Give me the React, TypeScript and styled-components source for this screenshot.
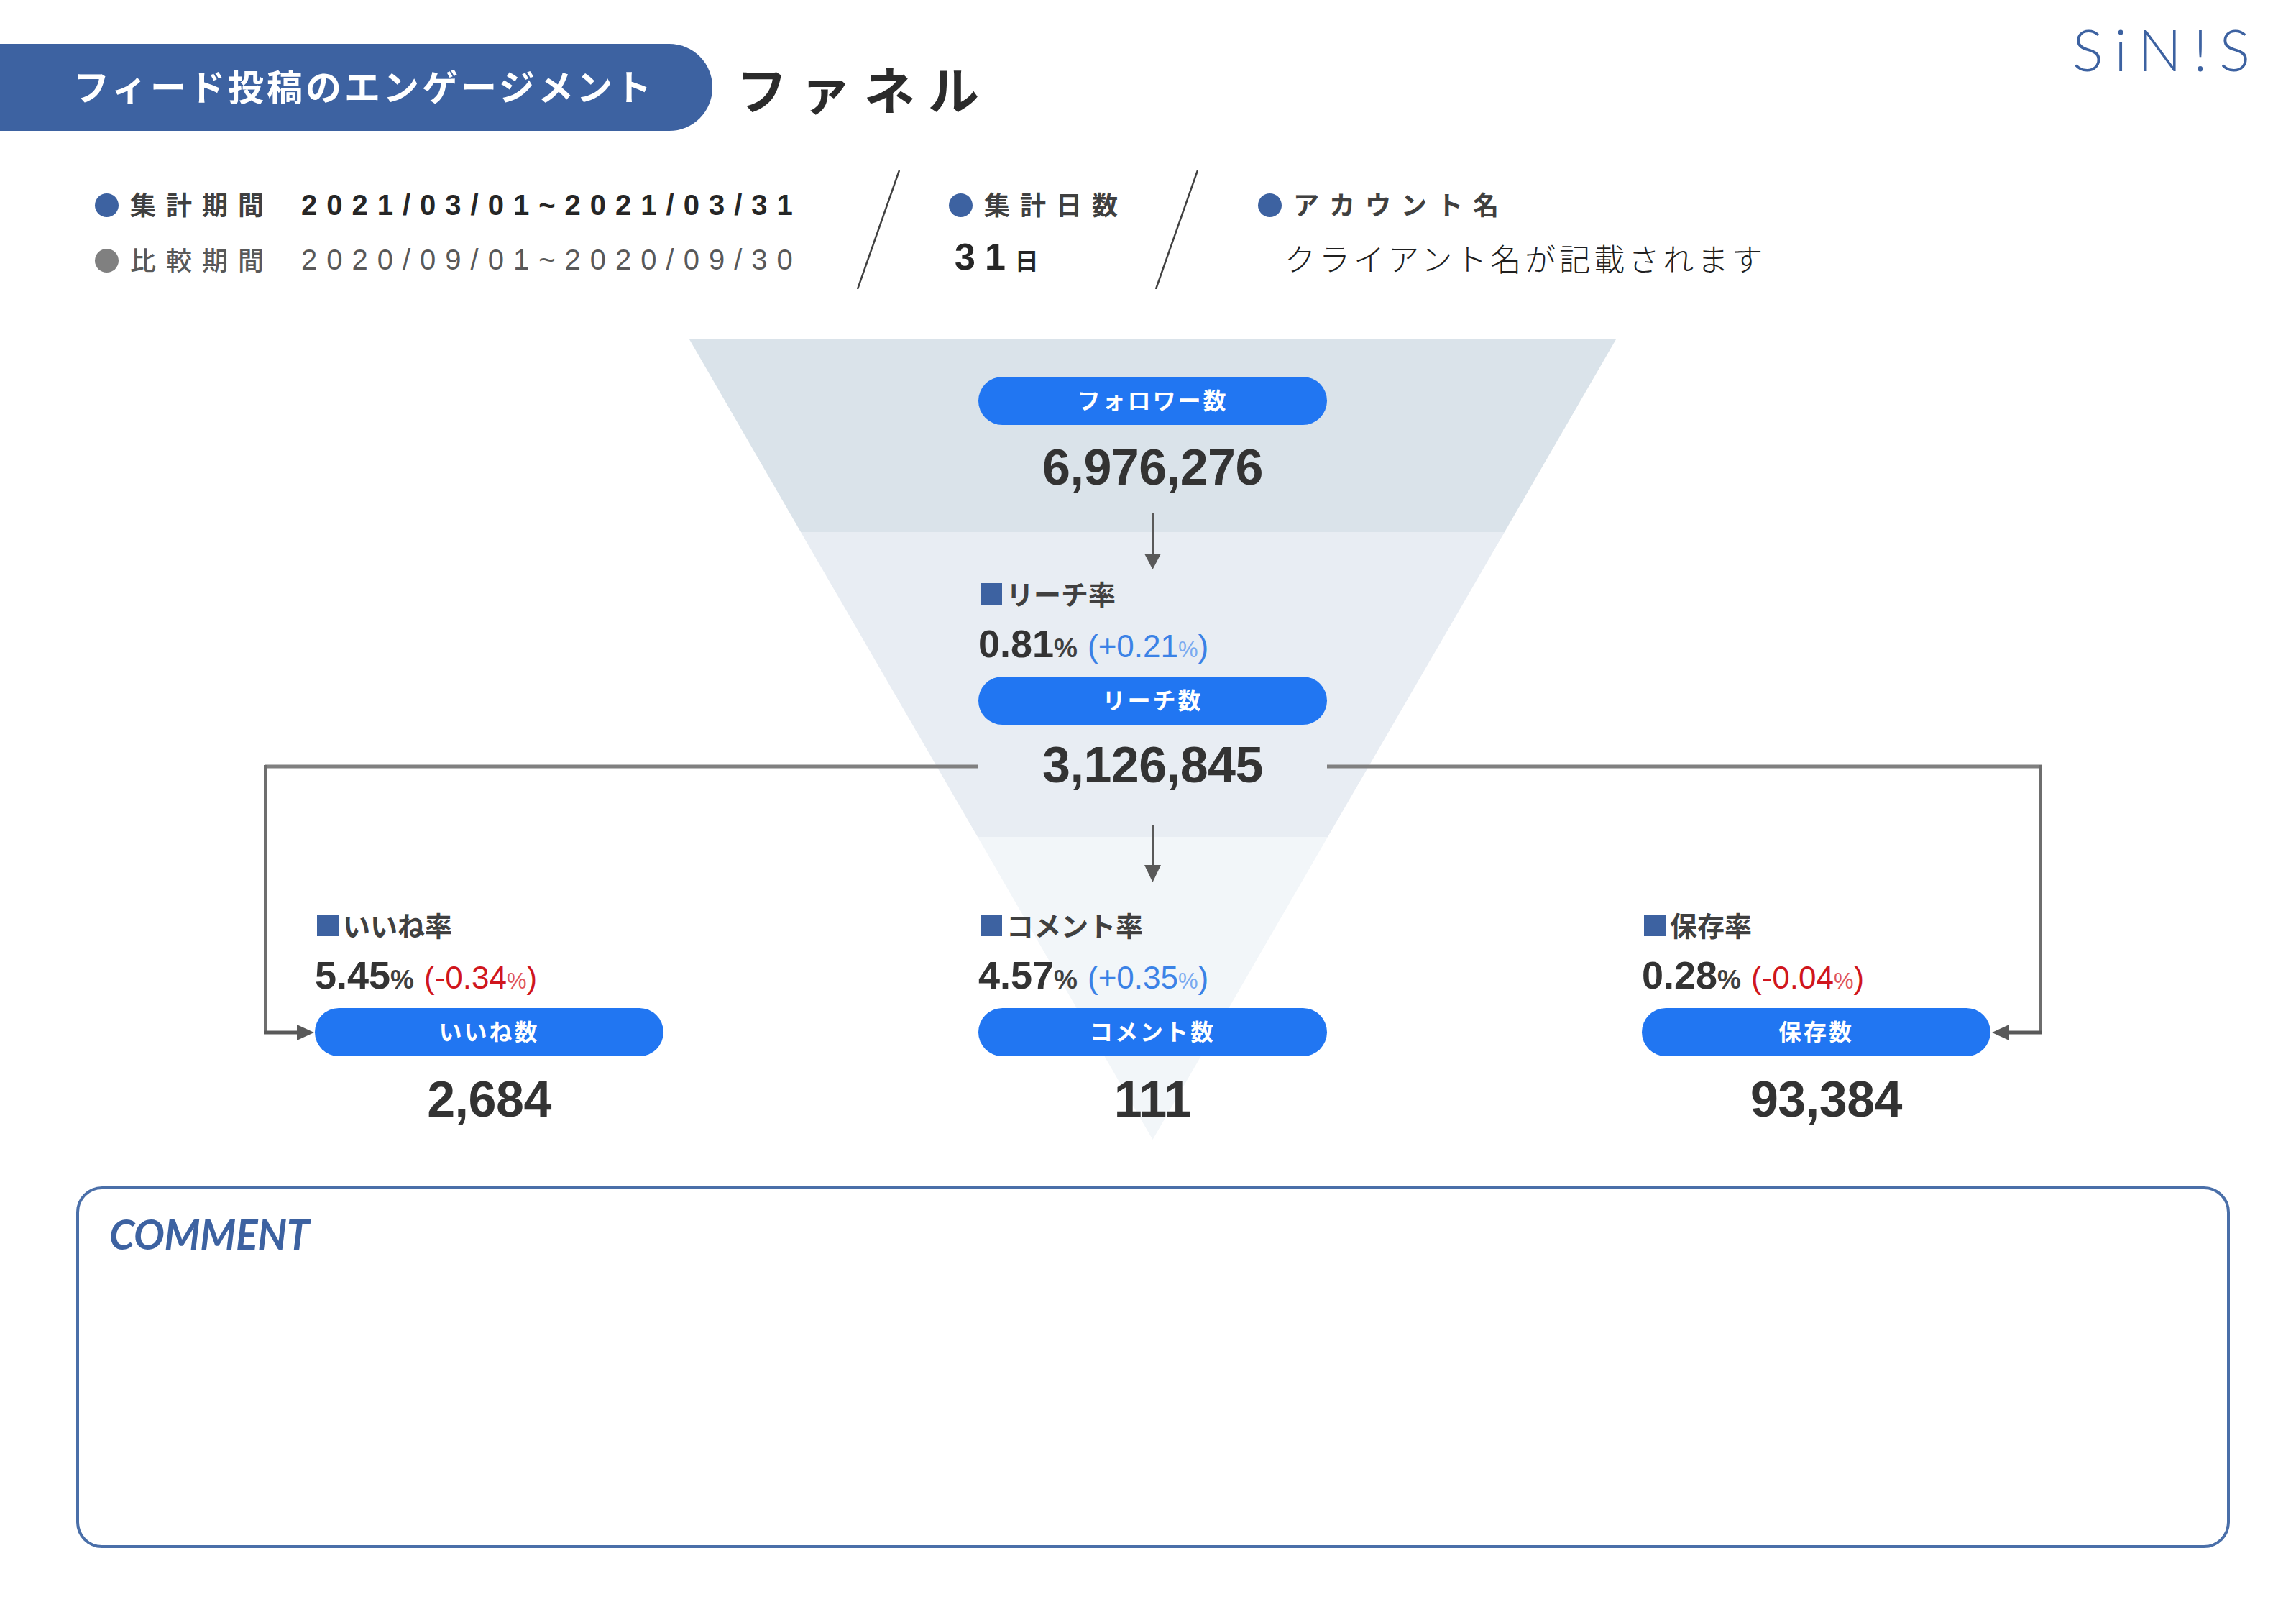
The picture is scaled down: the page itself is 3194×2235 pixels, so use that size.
import React from "react";
import styled, { createGlobalStyle } from "styled-components";

const Global = createGlobalStyle`
  html, body { margin: 0; padding: 0; background: #fff; }
  body { font-family: "Liberation Sans", "Noto Sans CJK JP", sans-serif; color: #333; }
  * { box-sizing: border-box; }
`;

const Page = styled.div`
  width: 3194px;
  height: 2235px;
  overflow: hidden;
  background: #fff;
`;

const Header = styled.header`
  display: flex;
  align-items: flex-start;
  height: 182px;
  padding-top: 42px;
`;

const TitlePill = styled.h1`
  margin: 19px 0 0;
  width: 991px;
  height: 121px;
  padding: 0 0 8px 102px;
  display: flex;
  align-items: center;
  background: #3d62a1;
  border-radius: 0 60px 60px 0;
  color: #fff;
  font-family: "Noto Sans CJK JP", sans-serif;
  font-size: 50px;
  font-weight: 700;
  letter-spacing: 4px;
  white-space: nowrap;
`;

const PageTitle = styled.h2`
  margin: 34px 0 0 33px;
  font-family: "Noto Sans CJK JP", sans-serif;
  font-size: 71px;
  line-height: 90px;
  font-weight: 700;
  letter-spacing: 18px;
  color: #2b2b2b;
  white-space: nowrap;
`;

const Logo = styled.div`
  margin-top: -4px;
  margin-left: auto;
  margin-right: 48px;
  font-family: Lato, "Liberation Sans", sans-serif;
  font-weight: 300;
  font-size: 80px;
  line-height: 60px;
  letter-spacing: 16px;
  color: #3d62a1;
  white-space: nowrap;
`;

const InfoBar = styled.section`
  display: flex;
  height: 165px;
  margin-top: 55px;
  padding-left: 132px;
`;

const InfoGroup = styled.div<{ $w: number; $pad?: number }>`
  width: ${(p) => p.$w}px;
  padding: 28px 0 0 ${(p) => p.$pad ?? 0}px;
  display: flex;
  flex-direction: column;
  gap: 37px;
  flex: none;
`;

const InfoRow = styled.div`
  display: flex;
  align-items: center;
  height: 40px;
  white-space: nowrap;
`;

const Dot = styled.span<{ $gray?: boolean }>`
  width: 33px;
  height: 33px;
  flex: none;
  border-radius: 50%;
  background: ${(p) => (p.$gray ? "#808080" : "#3d62a1")};
`;

const InfoLabel = styled.span<{ $muted?: boolean }>`
  margin: 0 0 5px 16px;
  font-family: "Noto Sans CJK JP", sans-serif;
  font-size: 36px;
  line-height: 40px;
  font-weight: ${(p) => (p.$muted ? 500 : 700)};
  letter-spacing: 14px;
  color: ${(p) => (p.$muted ? "#595959" : "#404040")};
`;

const DateText = styled.span<{ $muted?: boolean }>`
  margin-left: 38px;
  margin-bottom: ${(p) => (p.$muted ? 2 : 0)}px;
  font-size: 40px;
  line-height: 40px;
  font-weight: ${(p) => (p.$muted ? 400 : 700)};
  letter-spacing: 13px;
  color: ${(p) => (p.$muted ? "#595959" : "#262626")};
`;

const DaysValue = styled.span`
  margin: 0 0 6px 8px;
  font-size: 52px;
  line-height: 40px;
  font-weight: 700;
  letter-spacing: 13px;
  color: #262626;
`;

const DaysUnit = styled.span`
  font-family: "Noto Sans CJK JP", sans-serif;
  font-size: 33px;
  letter-spacing: 0;
`;

const ClientName = styled.span`
  margin: 0 0 9px 37px;
  font-family: "Noto Sans CJK JP", sans-serif;
  font-size: 43px;
  line-height: 40px;
  font-weight: 300;
  letter-spacing: 5px;
  color: #1f1f1f;
`;

const Slash = styled.svg`
  flex: none;
  width: 60px;
  height: 165px;
`;

const Diagram = styled.section`
  position: relative;
  height: 1178px;
  margin-top: 70px;
  display: grid;
  grid-template-columns: repeat(3, 485px);
  column-gap: 438px;
  align-content: start;
  padding-left: 438px;
`;

const DiagramArt = styled.svg`
  position: absolute;
  left: 0;
  top: 0;
  width: 3194px;
  height: 1178px;
`;

const Node = styled.div<{ $top: number; $col: number }>`
  position: relative;
  grid-column: ${(p) => p.$col};
  margin-top: ${(p) => p.$top}px;
`;

const RateLabel = styled.div`
  display: flex;
  align-items: center;
  height: 40px;
  padding-left: 3px;
  font-family: "Noto Sans CJK JP", sans-serif;
  font-size: 38px;
  font-weight: 700;
  color: #404040;
  white-space: nowrap;
`;

const Square = styled.span`
  width: 30px;
  height: 30px;
  margin: 4px 6px 0 0;
  background: #3d62a1;
`;

const RateRow = styled.div`
  height: 60px;
  margin-top: 21px;
  line-height: 60px;
  white-space: nowrap;
`;

const RateValue = styled.span`
  font-size: 54px;
  font-weight: 700;
  letter-spacing: 0;
  color: #333;
`;

const RatePercent = styled.span`
  font-size: 37px;
  font-weight: 700;
  color: #404040;
`;

const Delta = styled.span<{ $down?: boolean }>`
  margin-left: 14px;
  font-size: 44px;
  color: ${(p) => (p.$down ? "#d0161d" : "#3b82e6")};
`;

const DeltaPercent = styled.span<{ $down?: boolean }>`
  font-size: 31px;
  color: ${(p) => (p.$down ? "#e0565b" : "#7aaaf0")};
`;

const NamePill = styled.div<{ $gap: number }>`
  height: 67px;
  margin-top: ${(p) => p.$gap}px;
  padding-bottom: 6px;
  display: flex;
  align-items: center;
  justify-content: center;
  border-radius: 34px;
  background: #2176f2;
  color: #fff;
  font-family: "Noto Sans CJK JP", sans-serif;
  font-size: 32px;
  font-weight: 700;
  letter-spacing: 3px;
  white-space: nowrap;
`;

const Count = styled.div<{ $gap: number; $shift?: number }>`
  height: 80px;
  margin-top: ${(p) => p.$gap}px;
  padding-left: ${(p) => p.$shift ?? 0}px;
  text-align: center;
  font-size: 70px;
  line-height: 80px;
  font-weight: 700;
  letter-spacing: -0.5px;
  color: #333;
`;

const CommentBox = styled.section`
  width: 2996px;
  height: 503px;
  margin-left: 106px;
  padding: 30px 42px;
  border: 4px solid #4a6fa9;
  border-radius: 36px;
  background: #fff;
`;

const CommentTitle = styled.h3`
  margin: 0;
  font-family: Lato, "Liberation Sans", sans-serif;
  font-size: 57px;
  line-height: 64px;
  font-style: italic;
  font-weight: 700;
  letter-spacing: -0.4px;
  color: #3d62a1;
`;

type NodeData = {
  col: number;
  top: number;
  rateLabel?: string;
  rate?: string;
  delta?: string;
  down?: boolean;
  pill: string;
  count: string;
  countGap: number;
  shift?: number;
};

const nodes: NodeData[] = [
  { col: 2, top: 52, pill: "フォロワー数", count: "6,976,276", countGap: 19 },
  { col: 2, top: 114, rateLabel: "リーチ率", rate: "0.81", delta: "+0.21", pill: "リーチ数", count: "3,126,845", countGap: 16 },
  { col: 1, top: 161, rateLabel: "いいね率", rate: "5.45", delta: "-0.34", down: true, pill: "いいね数", count: "2,684", countGap: 20 },
  { col: 2, top: 161, rateLabel: "コメント率", rate: "4.57", delta: "+0.35", pill: "コメント数", count: "111", countGap: 20 },
  { col: 3, top: 161, rateLabel: "保存率", rate: "0.28", delta: "-0.04", down: true, pill: "保存数", count: "93,384", countGap: 20, shift: 28 },
];

const SlashMark = () => (
  <Slash viewBox="0 0 60 165">
    <line x1="59" y1="0" x2="1" y2="165" stroke="#404040" strokeWidth="2.5" />
  </Slash>
);

export default function App() {
  return (
    <Page>
      <Global />
      <Header>
        <TitlePill>フィード投稿のエンゲージメント</TitlePill>
        <PageTitle>ファネル</PageTitle>
        <Logo>SiN!S</Logo>
      </Header>

      <InfoBar>
        <InfoGroup $w={1060}>
          <InfoRow>
            <Dot />
            <InfoLabel>集計期間</InfoLabel>
            <DateText>2021/03/01~2021/03/31</DateText>
          </InfoRow>
          <InfoRow>
            <Dot $gray />
            <InfoLabel $muted>比較期間</InfoLabel>
            <DateText $muted>2020/09/01~2020/09/30</DateText>
          </InfoRow>
        </InfoGroup>
        <SlashMark />
        <InfoGroup $w={355} $pad={68}>
          <InfoRow>
            <Dot />
            <InfoLabel>集計日数</InfoLabel>
          </InfoRow>
          <InfoRow>
            <DaysValue>
              31<DaysUnit>日</DaysUnit>
            </DaysValue>
          </InfoRow>
        </InfoGroup>
        <SlashMark />
        <InfoGroup $w={900} $pad={83}>
          <InfoRow>
            <Dot />
            <InfoLabel>アカウント名</InfoLabel>
          </InfoRow>
          <InfoRow>
            <ClientName>クライアント名が記載されます</ClientName>
          </InfoRow>
        </InfoGroup>
      </InfoBar>

      <Diagram>
        <DiagramArt viewBox="0 0 3194 1178">
          <polygon points="959,0 2248,0 2093,268 1114,268" fill="#dae3ea" />
          <polygon points="1114,268 2093,268 1847,692 1360,692" fill="#e8edf3" />
          <polygon points="1360,692 1847,692 1603.5,1113" fill="#f2f6f9" />
          <line x1="1603.5" y1="241" x2="1603.5" y2="302" stroke="#595959" strokeWidth="3" />
          <polygon points="1592,298 1615,298 1603.5,320" fill="#595959" />
          <line x1="1603.5" y1="676" x2="1603.5" y2="735" stroke="#595959" strokeWidth="3" />
          <polygon points="1592,731 1615,731 1603.5,755" fill="#595959" />
          <path d="M1361 594 H369" stroke="#808080" strokeWidth="5" fill="none" />
          <path d="M1846 594 H2840" stroke="#808080" strokeWidth="5" fill="none" />
          <path d="M369 592 V966" stroke="#6e6e6e" strokeWidth="4" fill="none" />
          <path d="M2839 592 V966" stroke="#6e6e6e" strokeWidth="4" fill="none" />
          <path d="M367 964 H418" stroke="#595959" strokeWidth="5" fill="none" />
          <path d="M2841 964 H2790" stroke="#595959" strokeWidth="5" fill="none" />
          <polygon points="413,953 413,975 437,964" fill="#595959" />
          <polygon points="2795,953 2795,975 2771,964" fill="#595959" />
        </DiagramArt>
        {nodes.map((n) => (
          <Node key={n.pill} $col={n.col} $top={n.top}>
            {n.rateLabel && (
              <>
                <RateLabel>
                  <Square />
                  {n.rateLabel}
                </RateLabel>
                <RateRow>
                  <RateValue>{n.rate}</RateValue>
                  <RatePercent>%</RatePercent>
                  <Delta $down={n.down}>
                    ({n.delta}
                    <DeltaPercent $down={n.down}>%</DeltaPercent>)
                  </Delta>
                </RateRow>
              </>
            )}
            <NamePill $gap={n.rateLabel ? 16 : 0}>{n.pill}</NamePill>
            <Count $gap={n.countGap} $shift={n.shift}>
              {n.count}
            </Count>
          </Node>
        ))}
      </Diagram>

      <CommentBox>
        <CommentTitle>COMMENT</CommentTitle>
      </CommentBox>
    </Page>
  );
}
